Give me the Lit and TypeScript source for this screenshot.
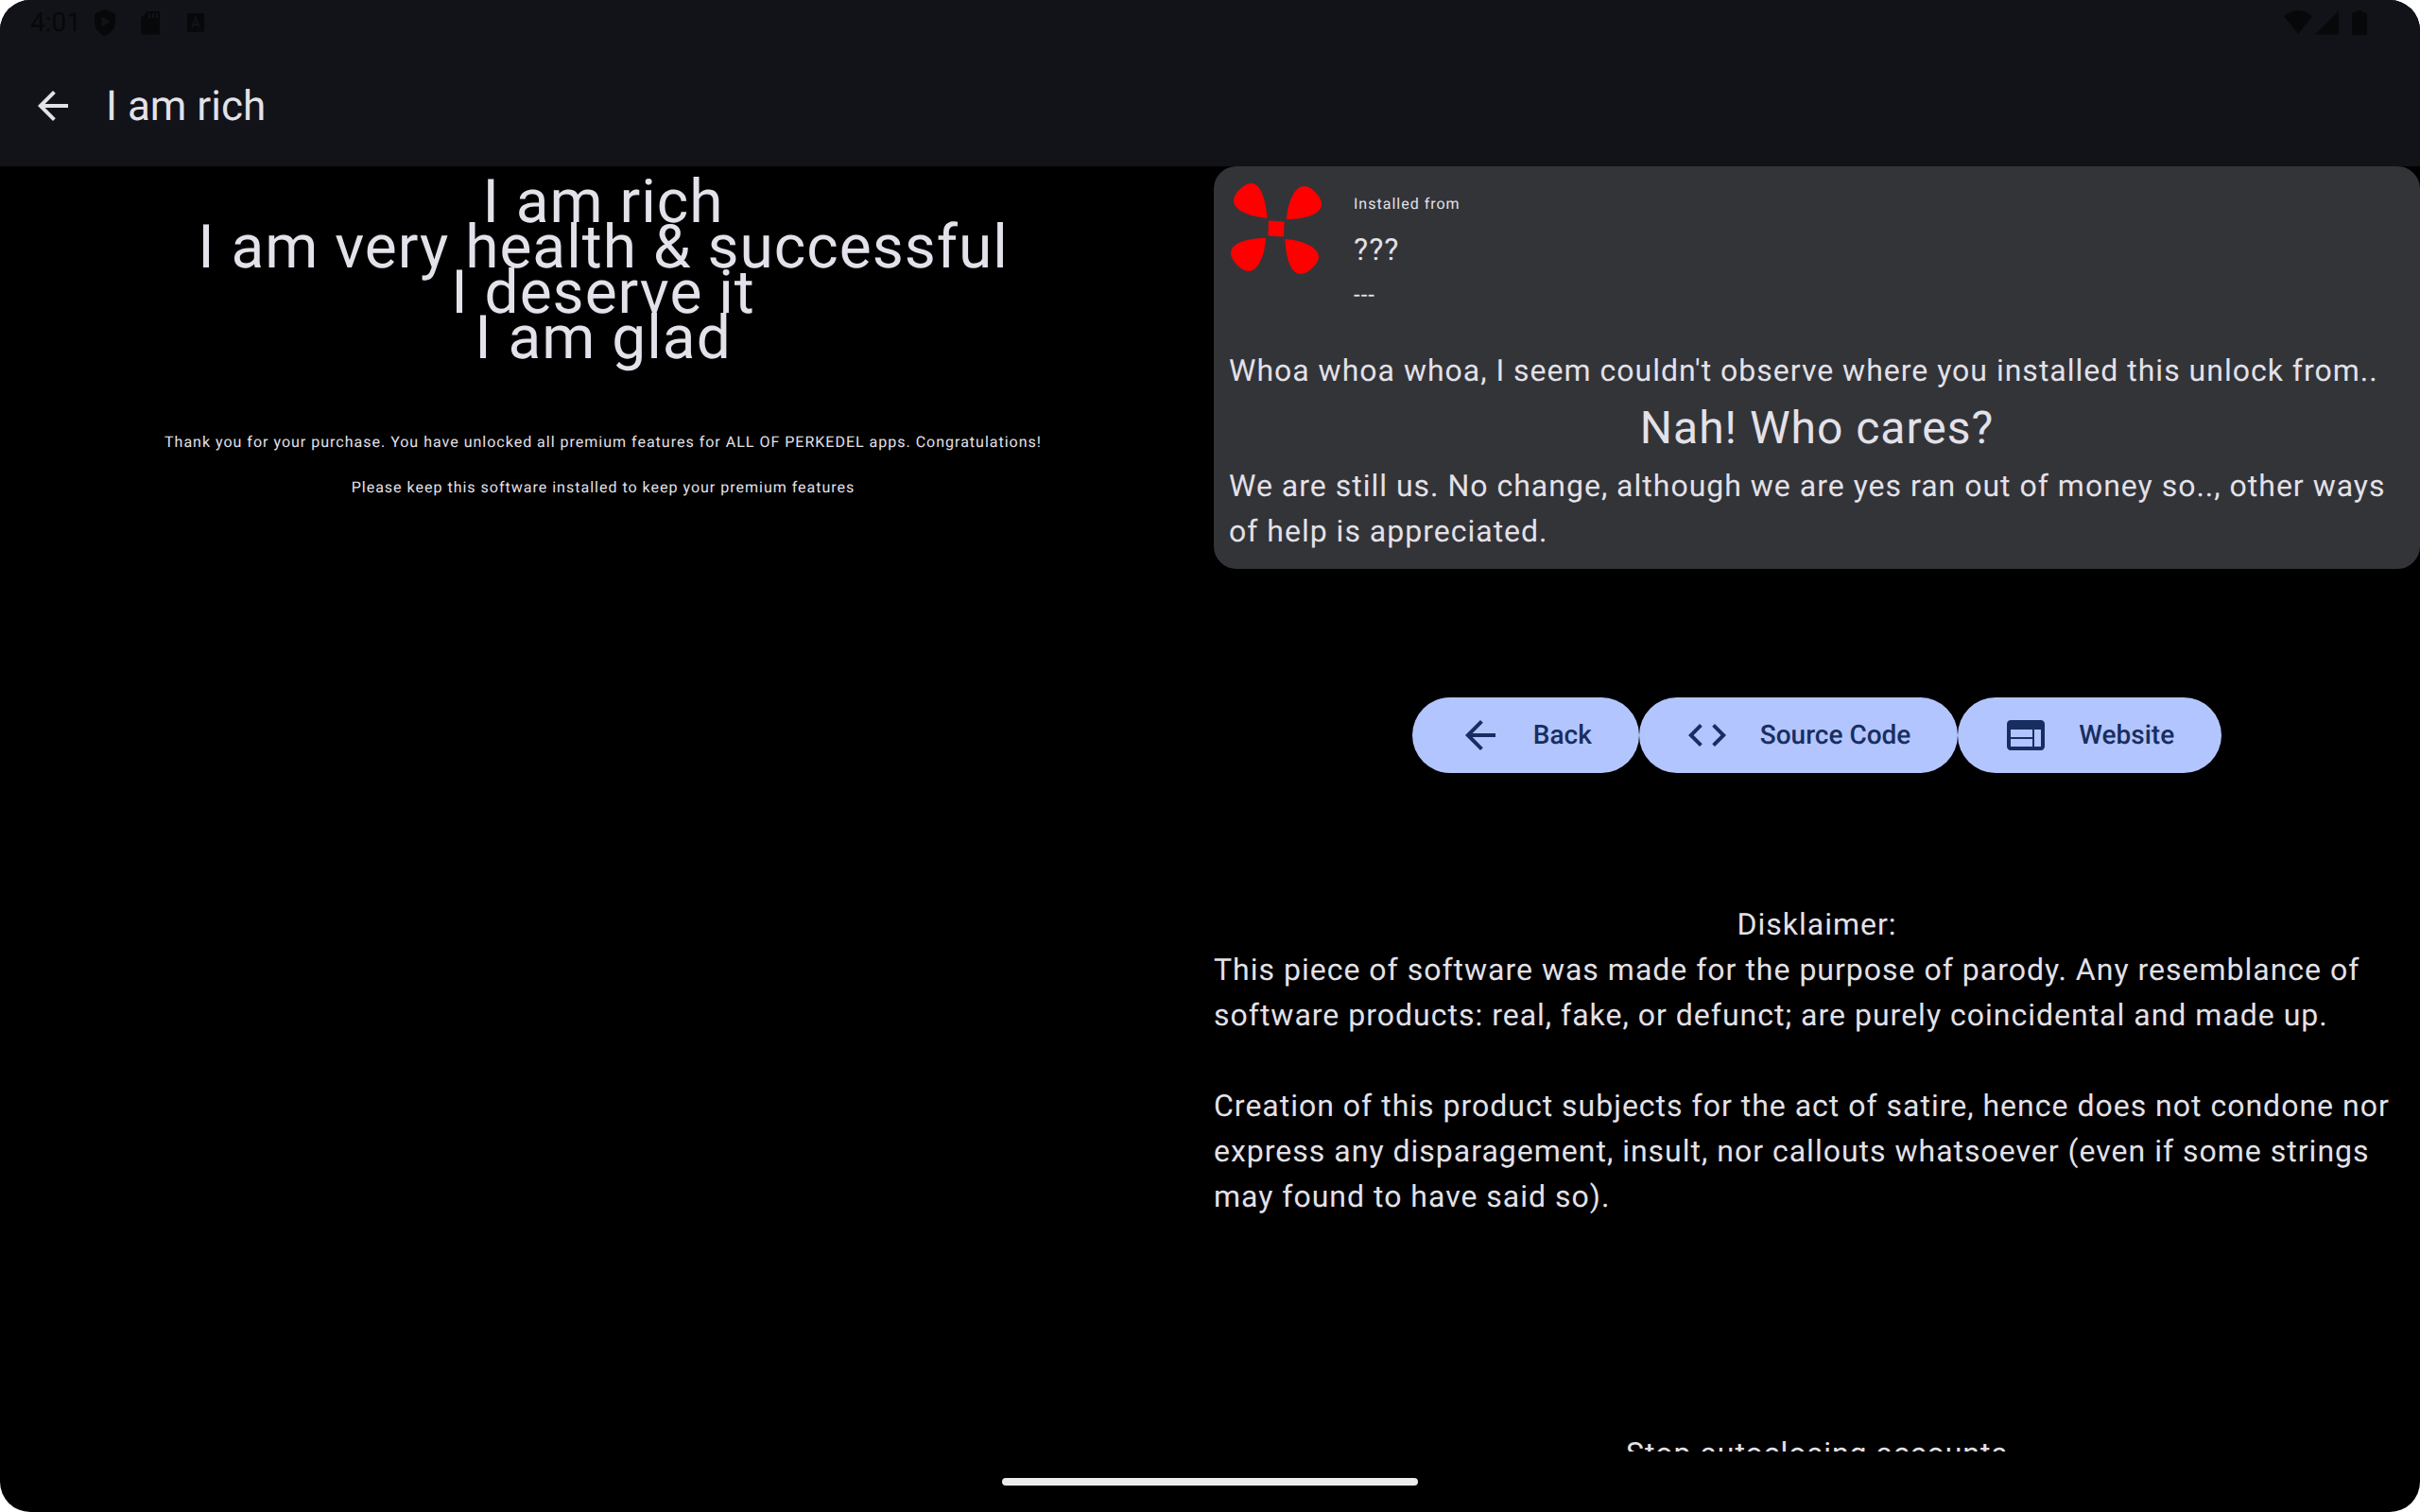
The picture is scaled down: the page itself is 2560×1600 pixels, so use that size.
import { LitElement, html, css, svg } from "lit";
import { customElement } from "lit/decorators.js";

const ARROW = svg`<path d="M20 11H7.83l5.59-5.59L12 4l-8 8 8 8 1.41-1.41L7.83 13H20v-2z"/>`;
const CODE = svg`<path d="M9.4 16.6 4.8 12l4.6-4.6L8 6l-6 6 6 6 1.4-1.4zm5.2 0 4.6-4.6-4.6-4.6L16 6l6 6-6 6-1.4-1.4z"/>`;
const WEB = svg`<path fill-rule="evenodd" d="M20 4H4c-1.1 0-1.99.9-1.99 2L2 18c0 1.1.9 2 2 2h16c1.1 0 2-.9 2-2V6c0-1.100-.9-2-2-2zM15.500 18H4v-4h11.500v4zm0-5H4V9h11.500v4zm4.500 5h-3.500V9H20v9z"/>`;

const icon = (shape: unknown) => html`<svg class="icon" viewBox="0 0 24 24" aria-hidden="true">${shape}</svg>`;

@customElement("app-root")
export class AppRoot extends LitElement {
  static styles = css`
    :host {
      display: block;
      background: #fff;
      font-family: Roboto, "Noto Sans", sans-serif;
      font-size: 32px;
      line-height: 48px;
      color: #e3e1e9;
      text-rendering: geometricPrecision;
    }
    h1, h2, p { margin: 0; padding: 0; font-weight: 400; }
    .screen {
      display: flex;
      flex-direction: column;
      height: 100vh;
      border-radius: 32px;
      overflow: hidden;
      background: #000;
    }
    .icon { width: 48px; height: 48px; fill: currentColor; flex: none; }
    .top { background: #121318; flex: none; }
    .status {
      display: flex;
      align-items: center;
      justify-content: space-between;
      height: 48px;
      padding: 0 48px 0 32px;
      color: #07080a;
      font-size: 28px;
    }
    .group { display: flex; align-items: center; }
    .notices { width: 136px; height: 48px; fill: currentColor; }
    .signals { width: 96px; height: 48px; fill: currentColor; }
    .bar { display: flex; align-items: center; gap: 32px; height: 128px; padding: 0 32px; }
    .back { display: flex; padding: 0; border: 0; background: none; color: inherit; cursor: pointer; }
    .title { font-size: 44px; }
    .panes {
      flex: 1;
      min-height: 0;
      display: grid;
      grid-template-columns: 1fr 1fr;
      gap: 8px;
      overflow: hidden;
      letter-spacing: 1px;
    }
    .pane { min-width: 0; min-height: 0; overflow: hidden; }
    .center { text-align: center; }
    .praise { padding-top: 14px; font-size: 64px; }
    .thanks { padding-top: 62px; font-size: 16px; }
    .card { padding: 16px; border-radius: 24px; background: #333438; }
    .source { display: flex; gap: 32px; margin-bottom: 32px; }
    .logo { width: 100px; height: 100px; fill: #f00; flex: none; }
    .small { font-size: 16px; }
    .medium { font-size: 24px; }
    .shout { font-size: 48px; line-height: 74px; text-align: center; }
    .actions { display: flex; justify-content: center; padding: 136px 0; }
    .action {
      display: flex;
      align-items: center;
      gap: 32px;
      height: 80px;
      padding: 0 50px 0 48px;
      border: 0;
      border-radius: 40px;
      background: #b3c5ff;
      color: #182e60;
      font: 500 28px/40px Roboto, "Noto Sans", sans-serif;
      letter-spacing: normal;
      text-rendering: inherit;
      white-space: nowrap;
      text-decoration: none;
      box-sizing: border-box;
      cursor: pointer;
    }
    .heading { font-size: 32px; text-align: center; }
    .para { margin-bottom: 48px; }
    .next { padding-top: 176px; text-align: center; }
    .nav { flex: none; display: flex; align-items: center; justify-content: center; height: 64px; }
    .handle { width: 440px; height: 8px; border-radius: 4px; background: #ececec; }
  `;

  render() {
    return html`
      <div class="screen">
        <header class="top">
          <div class="status">
            <div class="group">
              <span>4:01</span>
              <svg class="notices" viewBox="4 0 136 48" aria-hidden="true">
                <path fill-rule="evenodd" d="M29 10 40 14.500V23C40 30 35.500 35.500 29 38 22.500 35.500 18 30 18 23V14.500ZM25.500 17.500V28.500L34.500 23Z"/>
                <path fill-rule="evenodd" d="M74 12H85Q87 12 87 14V34.500Q87 36.500 85 36.500H69Q67 36.500 67 34.500V19ZM75 14V19H77V14ZM79 14V19H81V14ZM83 14V19H85V14Z"/>
                <rect x="116" y="14" width="18" height="20" rx="1"/>
                <path fill="none" stroke="#121318" stroke-width="2" d="M121 29 125 19 129 29M122 26H128"/>
                <path fill="none" stroke="#121318" stroke-dasharray="2 1" d="M126 32H133"/>
              </svg>
            </div>
            <svg class="signals" viewBox="0 0 96 48" aria-hidden="true">
              <path d="M0 17Q15 5 30 17L15 36Z"/>
              <path d="M33 36.500H58V11.500Z"/>
              <path d="M77 11H83V13H86Q88 13 88 15V35Q88 37 86 37H74Q72 37 72 35V15Q72 13 74 13H77Z"/>
            </svg>
          </div>
          <div class="bar">
            <button class="back" aria-label="Back">${icon(ARROW)}</button>
            <h1 class="title">I am rich</h1>
          </div>
        </header>
        <main class="panes">
          <section class="pane center">
            <div class="praise">
              <p>I am rich</p>
              <p>I am very health &amp; successful</p>
              <p>I deserve it</p>
              <p>I am glad</p>
            </div>
            <div class="thanks">
              <p>Thank you for your purchase. You have unlocked all premium features for ALL OF PERKEDEL apps. Congratulations!</p>
              <p>Please keep this software installed to keep your premium features</p>
            </div>
          </section>
          <section class="pane">
            <article class="card">
              <div class="source">
                <svg class="logo" viewBox="0 0 100 100" aria-hidden="true">
                  <path d="M40.500 39C39 20 34 2 23.500 2 16 2 5 13 5 20.500 5 30 20 37 40.500 39Z"/>
                  <path d="M61 40C62 23 69 5 80 5 87 5 98 16 98 24 98 35 80 40 61 40Z"/>
                  <path d="M39 60C20 60 2 65 2 76 2 83 13 95 20.500 95 31 95 38 78 39 60Z"/>
                  <path d="M59.500 61C78 62 95 70 95 80 95 87 83 98 76 98 65 98 60 80 59.500 61Z"/>
                  <path d="M42 41.500 58.500 42.500 58 58.500 41.500 57.500Z"/>
                </svg>
                <div>
                  <p class="small">Installed from</p>
                  <p>???</p>
                  <p class="medium">---</p>
                </div>
              </div>
              <p>Whoa whoa whoa, I seem couldn't observe where you installed this unlock from..</p>
              <p class="shout">Nah! Who cares?</p>
              <p>We are still us. No change, although we are yes ran out of money so.., other ways of help is appreciated.</p>
            </article>
            <div class="actions">
              <button class="action">${icon(ARROW)}Back</button>
              <a class="action" href="#source">${icon(CODE)}Source Code</a>
              <a class="action" href="#website">${icon(WEB)}Website</a>
            </div>
            <h2 class="heading">Disklaimer:</h2>
            <p class="para">This piece of software was made for the purpose of parody. Any resemblance of software products: real, fake, or defunct; are purely coincidental and made up.</p>
            <p class="para">Creation of this product subjects for the act of satire, hence does not condone nor express any disparagement, insult, nor callouts whatsoever (even if some strings may found to have said so).</p>
            <p class="next">Stop autoclosing accounts</p>
          </section>
        </main>
        <footer class="nav"><div class="handle"></div></footer>
      </div>
    `;
  }
}
